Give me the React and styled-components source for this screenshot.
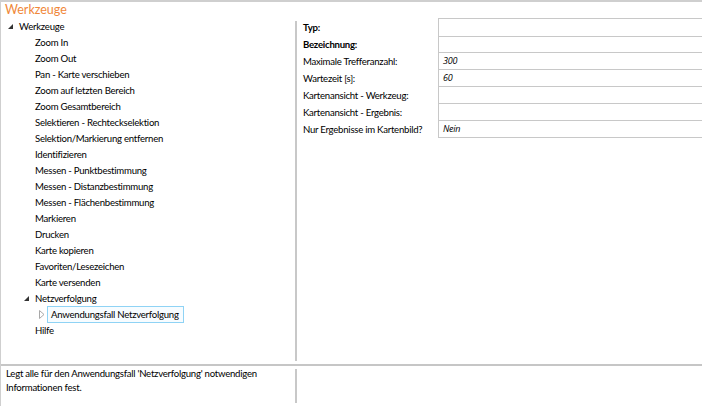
import React from 'react';
import styled, { createGlobalStyle } from 'styled-components';

const GlobalStyle = createGlobalStyle`
  html, body {
    margin: 0;
    padding: 0;
    background: #fff;
  }
  body {
    font-family: Lato, "Noto Sans", sans-serif;
    font-size: 9.6px;
    letter-spacing: -0.25px;
    color: #000;
  }
`;

const tools = [
  'Zoom In',
  'Zoom Out',
  'Pan - Karte verschieben',
  'Zoom auf letzten Bereich',
  'Zoom Gesamtbereich',
  'Selektieren - Rechteckselektion',
  'Selektion/Markierung entfernen',
  'Identifizieren',
  'Messen - Punktbestimmung',
  'Messen - Distanzbestimmung',
  'Messen - Flächenbestimmung',
  'Markieren',
  'Drucken',
  'Karte kopieren',
  'Favoriten/Lesezeichen',
  'Karte versenden',
];

const properties = [
  { label: 'Typ:', bold: true, value: '' },
  { label: 'Bezeichnung:', bold: true, value: '' },
  { label: 'Maximale Trefferanzahl:', value: '300' },
  { label: 'Wartezeit [s]:', value: '60' },
  { label: 'Kartenansicht - Werkzeug:', value: '' },
  { label: 'Kartenansicht - Ergebnis:', value: '' },
  { label: 'Nur Ergebnisse im Kartenbild?', value: 'Nein' },
];

function ExpandedGlyph() {
  return (
    <svg width="5" height="5" viewBox="0 0 5 5">
      <polygon points="5,0 5,5 0,5" fill="#333" />
    </svg>
  );
}

function CollapsedGlyph() {
  return (
    <svg width="6" height="9" viewBox="0 0 6 9">
      <polygon points="0.5,0.5 5,4.5 0.5,8.5" fill="none" stroke="#a8a8a8" strokeWidth="1" />
    </svg>
  );
}

function TreeItem({ level, glyph, selected, children }) {
  return (
    <Row $level={level}>
      <Toggle $open={glyph === 'open'}>
        {glyph === 'open' && <ExpandedGlyph />}
        {glyph === 'closed' && <CollapsedGlyph />}
      </Toggle>
      <Label $selected={selected}>{children}</Label>
    </Row>
  );
}

export default function App() {
  return (
    <>
      <GlobalStyle />
      <Frame>
        <Title>Werkzeuge</Title>
        <Main>
          <Tree>
            <TreeItem level={0} glyph="open">Werkzeuge</TreeItem>
            {tools.map((t) => (
              <TreeItem key={t} level={1}>{t}</TreeItem>
            ))}
            <TreeItem level={1} glyph="open">Netzverfolgung</TreeItem>
            <TreeItem level={2} glyph="closed" selected>
              Anwendungsfall Netzverfolgung
            </TreeItem>
            <TreeItem level={1}>Hilfe</TreeItem>
          </Tree>
          <Splitter />
          <PropertyGrid>
            {properties.map((p, i) => (
              <PropRow key={p.label}>
                <PropLabel $bold={p.bold}>{p.label}</PropLabel>
                <PropValue $first={i === 0}>{p.value}</PropValue>
              </PropRow>
            ))}
          </PropertyGrid>
        </Main>
        <Footer>
          <Description>
            Legt alle für den Anwendungsfall 'Netzverfolgung' notwendigen
            <br />
            Informationen fest.
          </Description>
          <Splitter />
          <div />
        </Footer>
      </Frame>
    </>
  );
}

const Frame = styled.div`
  width: 702px;
  height: 406px;
  box-sizing: border-box;
  border-top: 2px solid #cfcfcf;
  border-left: 1px solid #cfcfcf;
  display: flex;
  flex-direction: column;
  overflow: hidden;
`;

const Title = styled.div`
  height: 16px;
  padding-left: 4px;
  font-size: 12.5px;
  letter-spacing: 0;
  line-height: 16px;
  color: #f0883a;
`;

const Main = styled.div`
  height: 346px;
  display: grid;
  grid-template-columns: 294px 2px 1fr;
  border-bottom: 2px solid #c6c6c6;
`;

const Tree = styled.div`
  display: flex;
  flex-direction: column;
`;

const Row = styled.div`
  height: 16px;
  display: flex;
  align-items: center;
  padding-left: ${(p) => 5 + p.$level * 16}px;
  white-space: nowrap;
`;

const Toggle = styled.span`
  width: 12px;
  height: 16px;
  box-sizing: border-box;
  display: flex;
  align-items: center;
  padding-left: ${(p) => (p.$open ? 2 : 1)}px;
  padding-top: ${(p) => (p.$open ? 1 : 0)}px;
`;

const Label = styled.span`
  height: 15px;
  line-height: 15px;
  padding: 0 4px 0 ${(p) => (p.$selected ? 3 : 1)}px;
  margin-left: ${(p) => (p.$selected ? -3 : 0)}px;
  border: 1px solid ${(p) => (p.$selected ? '#8fd3f5' : 'transparent')};
  border-width: ${(p) => (p.$selected ? 1 : 0)}px;
  background: ${(p) => (p.$selected ? '#f7fcff' : 'transparent')};
`;

const Splitter = styled.div`
  background: #c8c8c8;
  margin: 3px 0 3px;
`;

const PropertyGrid = styled.div`
  padding-left: 6px;
  display: flex;
  flex-direction: column;
`;

const PropRow = styled.div`
  height: 17px;
  display: grid;
  grid-template-columns: 135px 1fr;
`;

const PropLabel = styled.div`
  padding-top: 2px;
  line-height: 16px;
  font-weight: ${(p) => (p.$bold ? 700 : 400)};
  white-space: nowrap;
`;

const PropValue = styled.div`
  border-left: 1px solid #c8c8c8;
  border-bottom: 1px solid #c8c8c8;
  border-top: ${(p) => (p.$first ? '1px solid #c8c8c8' : 'none')};
  margin-bottom: ${(p) => (p.$first ? -1 : 0)}px;
  padding-left: 4px;
  font-family: "Open Sans", "Noto Sans", sans-serif;
  font-size: 9px;
  line-height: 17px;
  font-style: italic;
  font-synthesis: style;
`;

const Footer = styled.div`
  flex: 1;
  display: grid;
  grid-template-columns: 294px 2px 1fr;
`;

const Description = styled.div`
  padding: 1px 0 0 5px;
  line-height: 14px;
`;
